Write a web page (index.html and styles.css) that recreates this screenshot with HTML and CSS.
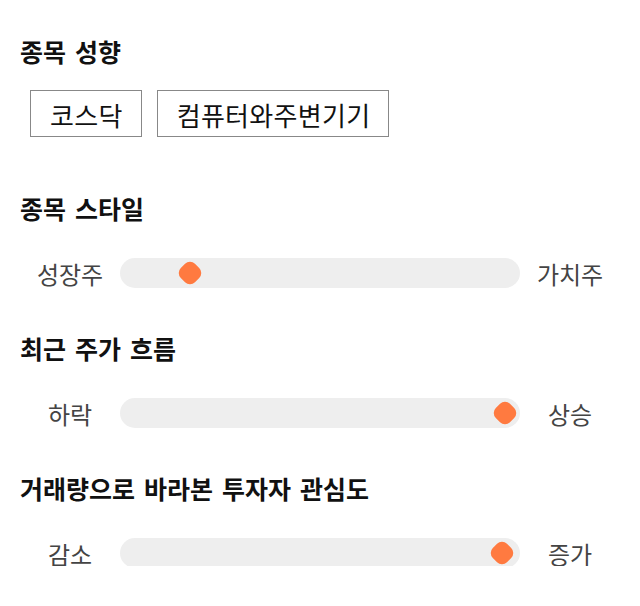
FILE: index.html
```html
<!DOCTYPE html>
<html lang="ko">
<head>
<meta charset="utf-8">
<link rel="stylesheet" href="styles.css">
</head>
<body>
<div class="page">
  <section class="section">
    <h2 class="title">종목 성향</h2>
    <div class="tags">
      <span class="tag">코스닥</span>
      <span class="tag">컴퓨터와주변기기</span>
    </div>
  </section>
  <section class="section">
    <h2 class="title">종목 스타일</h2>
    <div class="row">
      <span class="label">성장주</span>
      <div class="track"><span class="thumb" style="left: 70px"></span></div>
      <span class="label">가치주</span>
    </div>
  </section>
  <section class="section">
    <h2 class="title">최근 주가 흐름</h2>
    <div class="row">
      <span class="label">하락</span>
      <div class="track"><span class="thumb" style="left: 385px"></span></div>
      <span class="label">상승</span>
    </div>
  </section>
  <section class="section">
    <h2 class="title">거래량으로 바라본 투자자 관심도</h2>
    <div class="row">
      <span class="label">감소</span>
      <div class="track"><span class="thumb" style="left: 382px"></span></div>
      <span class="label">증가</span>
    </div>
  </section>
</div>
</body>
</html>
```
FILE: styles.css
```css
html, body {
  margin: 0;
  padding: 0;
  background: #fff;
}
body {
  font-family: "Noto Sans CJK KR", "Noto Sans", sans-serif;
  color: #111;
}
.page {
  padding: 36px 20px 0 20px;
  display: flex;
  flex-direction: column;
  gap: 47px;
}
.section {
  display: flex;
  flex-direction: column;
}
.title {
  margin: 0;
  font-size: 25px;
  font-weight: 700;
  line-height: 30px;
  height: 30px;
  color: #111;
  word-spacing: 2px;
}
.tags {
  display: flex;
  gap: 15px;
  margin: 24px 0 9px 10px;
}
.tag {
  box-sizing: border-box;
  height: 47px;
  border: 1px solid #888;
  padding: 3px 18px 0 19px;
  font-size: 26px;
  line-height: 42px;
  color: #111;
  letter-spacing: 0.3px;
}
.row {
  margin-top: 33px;
  display: grid;
  grid-template-columns: 100px 400px 100px;
  align-items: center;
  height: 30px;
}
.label {
  text-align: center;
  font-size: 24px;
  color: #444;
  line-height: 30px;
  margin-top: 3px;
}
.track {
  position: relative;
  height: 30px;
  background: #eee;
  border-radius: 15px;
}
.thumb {
  position: absolute;
  top: 50%;
  width: 20px;
  height: 20px;
  margin-left: -10px;
  margin-top: -10px;
  background: #ff7a40;
  border-radius: 35%;
  transform: rotate(45deg);
}
```
